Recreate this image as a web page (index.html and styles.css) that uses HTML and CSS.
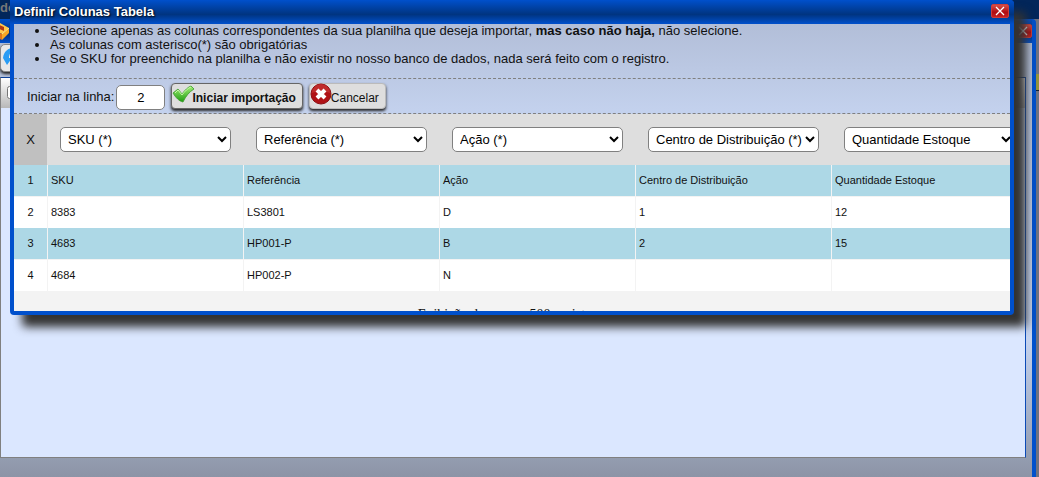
FILE: index.html
```html
<!DOCTYPE html>
<html lang="pt-BR">
<head>
    <meta charset="UTF-8">
    <meta name="viewport" content="width=device-width, initial-scale=1.0">
    <title>Definir Colunas Tabela</title>
    <link rel="stylesheet" href="styles.css">
</head>
<body>
    <div class="desktop-bar">de</div>
    <div class="window">
        <div class="window-title">
            <svg class="box-icon" viewBox="0 0 20 20" aria-hidden="true">
                <path d="M2 8 10 2l9 5-7 6z" fill="#ffc84a"/>
                <path d="M2 8v6l10 5v-6z" fill="#e0761a"/>
                <path d="M12 13v6l7-7V7z" fill="#f8a824"/>
                <path d="M7 3l7 3v4l-7-3z" fill="#b53a12"/>
                <path d="M12 13l7-6" stroke="#ffe890"/>
            </svg>
            <button class="close" type="button" aria-label="Fechar janela">
                <svg viewBox="0 0 16 12"><path d="M4 2l8 8M12 2 4 10"/></svg>
            </button>
        </div>
        <div class="toolbar">
            <button class="tool" type="button" aria-label="Atualizar">
                <svg viewBox="0 0 24 24">
                    <path d="M1 13C2 6 6 3 12 3v4c-3 0-5 2-5 6h3l-5 7-4-7z" fill="#2a9df4"/>
                    <path d="M23 11c-1 7-5 10-11 10v-4c3 0 5-2 5-6h-3l5-7z" fill="#1878d8"/>
                </svg>
            </button>
        </div>
        <div class="list">
            <div class="list-head"><input type="checkbox" aria-label="Selecionar todos"></div>
        </div>
    </div>
    <div class="edge-tab"></div>

    <div class="modal" role="dialog" aria-labelledby="modalTitle">
        <div class="modal-title">
            <span id="modalTitle">Definir Colunas Tabela</span>
            <button class="close" type="button" aria-label="Fechar">
                <svg viewBox="0 0 16 12"><path d="M4 2l8 8M12 2 4 10"/></svg>
            </button>
        </div>
        <div class="modal-body">
            <div class="intro">
                <ul>
                    <li>Selecione apenas as colunas correspondentes da sua planilha que deseja importar, <b>mas caso não haja,</b> não selecione.</li>
                    <li>As colunas com asterisco(*) são obrigatórias</li>
                    <li>Se o SKU for preenchido na planilha e não existir no nosso banco de dados, nada será feito com o registro.</li>
                </ul>
                <form class="controls">
                    <label for="linha">Iniciar na linha:</label>
                    <input id="linha" class="line" type="text" value="2">
                    <button class="button primary" type="button">
                        <svg viewBox="0 0 22 22" aria-hidden="true">
                            <defs>
                                <linearGradient id="green" x1="0" y1="0" x2="0" y2="1">
                                    <stop offset="0" stop-color="#a4f078"/>
                                    <stop offset="1" stop-color="#1e9c10"/>
                                </linearGradient>
                            </defs>
                            <path d="M1 10l5-4 4 5c3-4 6-7 9-8l3 3c-5 3-8 7-11 13-4-1-7-4-10-9z" fill="url(#green)" stroke="#3b9a2c" stroke-width=".8"/>
                            <path d="M3 10l3-3 4 5c3-4 6-7 9-8" fill="none" stroke="#c8f8a8"/>
                        </svg>
                        Iniciar importação
                    </button>
                    <button class="button" type="button">
                        <svg viewBox="0 0 22 22" aria-hidden="true">
                            <circle cx="11" cy="11" r="10" fill="#b01216" stroke="#8c1014"/>
                            <path d="M2 10a9 9 0 0 1 18 0c-5-2-12-2-18 0z" fill="#c02c2c"/>
                            <path d="M7 7l8 8M15 7l-8 8" stroke="#fff" stroke-width="4"/>
                        </svg>
                        Cancelar
                    </button>
                </form>
            </div>
            <table>
                <thead>
                    <tr>
                        <th>X</th>
                        <th><select aria-label="Coluna 1"><option>SKU (*)</option></select></th>
                        <th><select aria-label="Coluna 2"><option>Referência (*)</option></select></th>
                        <th><select aria-label="Coluna 3"><option>Ação (*)</option></select></th>
                        <th><select aria-label="Coluna 4"><option>Centro de Distribuição (*)</option></select></th>
                        <th><select aria-label="Coluna 5"><option>Quantidade Estoque</option></select></th>
                    </tr>
                </thead>
                <tbody>
                    <tr><td>1</td><td>SKU</td><td>Referência</td><td>Ação</td><td>Centro de Distribuição</td><td>Quantidade Estoque</td></tr>
                    <tr><td>2</td><td>8383</td><td>LS3801</td><td>D</td><td>1</td><td>12</td></tr>
                    <tr><td>3</td><td>4683</td><td>HP001-P</td><td>B</td><td>2</td><td>15</td></tr>
                    <tr><td>4</td><td>4684</td><td>HP002-P</td><td>N</td><td></td><td></td></tr>
                </tbody>
            </table>
            <p class="note">Exibição de apenas 500 registros</p>
        </div>
    </div>
</body>
</html>
```
FILE: styles.css
```css
* {
    box-sizing: border-box;
}
body {
    margin: 0;
    height: 100vh;
    overflow: hidden;
    position: relative;
    display: flex;
    flex-direction: column;
    background: #6e7280;
    font-family: "Liberation Sans", Arial, sans-serif;
    font-size: 13px;
    color: #111;
}
.desktop-bar {
    height: 19px;
    background: #02265a;
    color: #777;
    font-weight: bold;
}
.window {
    flex: 1;
    display: flex;
    flex-direction: column;
    margin-right: 3px;
    border-right: 4px solid #0050cc;
    border-radius: 0 4px 0 0;
    background: linear-gradient(#b0bcd4, #c4d2ee 70%, #8c94a6);
}
.window-title {
    height: 24px;
    display: flex;
    align-items: center;
    justify-content: space-between;
    background: linear-gradient(#0050cc, #00307c 60%, #0050cc);
}
.box-icon {
    width: 20px;
    height: 20px;
    margin-left: -10px;
}
.close {
    width: 18px;
    height: 14px;
    padding: 0;
    border: 1px solid #d03c38;
    border-radius: 2px;
    background: linear-gradient(#d85048, #b00c10 60%, #c82020);
    display: flex;
}
.close svg {
    width: 16px;
    height: 12px;
    stroke: #fff;
    stroke-width: 1.3;
    fill: none;
}
.toolbar {
    height: 34px;
}
.tool {
    width: 32px;
    height: 28px;
    margin: 1px 0;
    padding: 0 0 0 1px;
    border: 1px solid #888;
    border-radius: 5px;
    background: #e8e8e8;
    box-shadow: 0 2px 3px #222;
    text-align: left;
}
.tool svg {
    width: 24px;
    height: 24px;
}
.list {
    flex: 1;
    margin: 0 6px 19px 0;
    border: 1px solid #808080;
    border-top-color: #0a3f98;
    border-right-color: #0a4ab8;
    background: #dbe7ff;
}
.list-head {
    height: 30px;
    padding: 6px 4px;
    background: linear-gradient(#fff, #b8b8b8);
}
.list-head input {
    margin: 2px;
}
.edge-tab {
    position: absolute;
    top: 74px;
    right: 0;
    width: 3px;
    height: 17px;
    background: #94933c;
    border-bottom: 1px solid #123;
}
.modal {
    position: absolute;
    top: 0;
    left: 10px;
    right: 25px;
    padding: 0 4px 4px;
    border-radius: 0 4px 4px 4px;
    background: #0050cc;
    box-shadow: 12px 12px 10px #333;
}
.modal-title {
    height: 24px;
    margin: 0 -4px;
    padding: 0 5px 2px 4px;
    display: flex;
    align-items: center;
    justify-content: space-between;
    border-radius: 0 4px 0 0;
    background: linear-gradient(#0050cc, #003480 60%, #0050cc);
    color: #fff;
    font-weight: bold;
    text-shadow: 1px 1px 2px #000;
}
.modal-body {
    height: 287px;
    overflow: hidden;
    background: #f3f3f3;
}
.intro {
    background: linear-gradient(#b2bed8, #c4d2ee);
    line-height: 14px;
}
ul {
    margin: 0;
    padding: 0 0 12px 36px;
}
.controls {
    display: flex;
    align-items: center;
    height: 36px;
    padding-left: 13px;
    border-top: 1px dashed #808080;
    border-bottom: 1px dashed #808080;
}
.controls label {
    padding-top: 2px;
}
.line {
    width: 49px;
    height: 25px;
    margin: 2px 6px 0 2px;
    border: 1px solid #808080;
    border-radius: 5px;
    text-align: center;
    font: 13px "Liberation Sans", Arial, sans-serif;
}
.button {
    height: 26px;
    display: flex;
    align-items: center;
    margin: 0 6px 0 0;
    padding: 4px 6px 0 0;
    border: 1px solid #bbb;
    border-radius: 4px;
    background: #dedede;
    box-shadow: 0 2px 3px #222;
    color: #111;
    font: 12px "Liberation Sans", Arial, sans-serif;
}
.button svg {
    width: 22px;
    height: 22px;
    margin: 0 -1px 8px 0;
}
.primary {
    border-color: #666;
    font-weight: bold;
}
.primary svg {
    margin-right: -2px;
}
table {
    width: 1013px;
    border-collapse: separate;
    border-spacing: 0;
    table-layout: fixed;
    font-size: 11px;
}
th {
    height: 51px;
    padding: 0 0 0 13px;
    background: #dedede;
    font-size: 13px;
    font-weight: normal;
    text-align: left;
}
th:first-child {
    width: 33px;
    padding: 0;
    background: #c0c0c0;
    text-align: center;
}
select {
    width: 171px;
    height: 25px;
    padding: 0 0 0 3px;
    border: 1px solid #808080;
    border-radius: 5px;
    background: #fff;
    color: #000;
    font: 13px "Liberation Sans", Arial, sans-serif;
}
td {
    height: 31px;
    padding: 0 3px 1px;
    border-left: 1px solid #f3f3f3;
    background: #fff;
}
tbody tr:nth-child(odd) td {
    background: #add8e6;
}
tbody tr:nth-child(even) td {
    height: 32px;
    padding-bottom: 2px;
    border-top: 1px solid #f3f3f3;
}
td:first-child {
    border-left: 0;
    text-align: center;
}
.note {
    margin: 16px 0 0;
    padding-right: 4px;
    text-align: center;
    font-family: "Liberation Serif", serif;
    font-size: 14px;
}
```
